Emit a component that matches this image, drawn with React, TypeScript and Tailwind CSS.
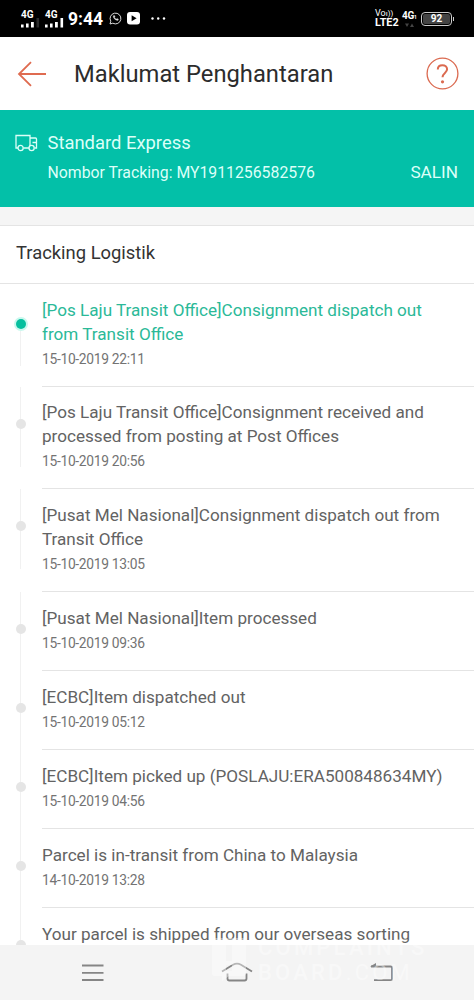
import React from 'react';
import { clsx } from 'clsx';

interface TrackingEvent {
  lines: string[];
  time?: string;
}

const events: TrackingEvent[] = [
  {
    lines: ['[Pos Laju Transit Office]Consignment dispatch out', 'from Transit Office'],
    time: '15-10-2019 22:11',
  },
  {
    lines: ['[Pos Laju Transit Office]Consignment received and', 'processed from posting at Post Offices'],
    time: '15-10-2019 20:56',
  },
  {
    lines: ['[Pusat Mel Nasional]Consignment dispatch out from', 'Transit Office'],
    time: '15-10-2019 13:05',
  },
  { lines: ['[Pusat Mel Nasional]Item processed'], time: '15-10-2019 09:36' },
  { lines: ['[ECBC]Item dispatched out'], time: '15-10-2019 05:12' },
  { lines: ['[ECBC]Item picked up (POSLAJU:ERA500848634MY)'], time: '15-10-2019 04:56' },
  { lines: ['Parcel is in-transit from China to Malaysia'], time: '14-10-2019 13:28' },
  { lines: ['Your parcel is shipped from our overseas sorting'] },
];

/** Signal strength with the network label on top */
const Signal: React.FC<{ dimLast?: boolean }> = ({ dimLast }) => (
  <div className="flex w-[19px] flex-col">
    <span className="text-[10px] font-bold leading-[10px]">4G</span>
    <svg width="19" height="11" viewBox="0 0 19 11" className="-mt-[3px]" fill="#fff">
      <rect x="0" y="7.5" width="2.6" height="3" />
      <rect x="5" y="6.5" width="2.6" height="4" />
      <rect x="10" y="5" width="2.8" height="5.5" />
      <rect x="15.5" y="1" width="2.6" height="9.5" fill={dimLast ? '#2b2b2b' : '#fff'} />
    </svg>
  </div>
);

const StatusBar: React.FC = () => (
  <header className="flex h-[37px] shrink-0 items-center bg-black pl-[21px] pr-[20px] text-white">
    <Signal dimLast />
    <div className="ml-[5px]">
      <Signal />
    </div>
    <span className="ml-[4px] mt-[2px] text-[17.5px] font-bold leading-none">9:44</span>
    <svg width="13" height="13" viewBox="0 0 13 13" className="ml-[6px]" fill="none" stroke="#ddd" strokeWidth="1">
      <path d="M1 12l.8-2.8A5.4 5.4 0 1 1 3.8 11.2z" />
      <path d="M4.3 3.7c-.7 1.8 2.4 5.1 4.7 4.7l.5-1.2-1.4-.8-.8.6C6.3 6.6 5.7 5.9 5.5 5.3l.6-.7-.6-1.2z" fill="#ddd" strokeWidth=".3" />
    </svg>
    <svg width="13" height="13" viewBox="0 0 13 13" className="ml-[5px]">
      <rect width="13" height="12.5" rx="3" fill="#fff" />
      <path d="M4.6 3.3v6l5-3z" fill="#000" />
    </svg>
    <svg width="15" height="3" viewBox="0 0 15 3" className="ml-[11px]" fill="#fff">
      <circle cx="1.5" cy="1.5" r="1.2" />
      <circle cx="7.2" cy="1.5" r="1.2" />
      <circle cx="13" cy="1.5" r="1.2" />
    </svg>
    <div className="ml-auto flex w-[25px] flex-col">
      <span className="whitespace-nowrap text-[9px] leading-[8px]">Vo<span className="text-[8px]">ı))</span></span>
      <span className="whitespace-nowrap text-[10.8px] font-bold leading-[10px]">LTE2</span>
    </div>
    <div className="ml-[2px] flex w-[16px] flex-col">
      <span className="whitespace-nowrap text-[10px] font-bold leading-[11px] tracking-[-0.3px]">
        4G<span className="text-[5px]">1</span>
      </span>
      <svg width="9" height="5" viewBox="0 0 9 5" className="ml-[3px]" fill="#444">
        <path d="M0 .5h4L2 4z M5 4h4L7 .5z" />
      </svg>
    </div>
    <div className="ml-[3px] flex items-center">
      <div className="flex h-[14px] w-[31px] rounded-[4px] border border-[#ccc] p-[1px]">
        <div className="flex h-full w-full items-center justify-center rounded-[2px] bg-[#444] text-[10px] font-bold leading-none">
          92
        </div>
      </div>
      <div className="ml-px h-[4px] w-px bg-[#ccc]" />
    </div>
  </header>
);

const TitleBar: React.FC = () => (
  <div className="flex h-[73px] shrink-0 items-center bg-white pl-[17px] pr-[15px]">
    <svg width="30" height="26" viewBox="0 0 30 26" fill="none" stroke="#df6b50" strokeWidth="1.8">
      <path d="M29 13H2M14 1.2L2 13l12 11.8" />
    </svg>
    <h1 className="ml-[27px] whitespace-nowrap pt-[2px] text-[23.75px] leading-none text-[#2c2c2c]">Maklumat Penghantaran</h1>
    <svg width="33" height="33" viewBox="0 0 33 33" className="ml-auto" fill="none" stroke="#db6a50">
      <circle cx="16.5" cy="16.5" r="15.4" strokeWidth="1.3" />
      <path d="M11.8 12.5c0-2.8 2-4.3 4.6-4.3s4.7 1.6 4.7 4.1c0 3.5-4.6 3.8-4.6 8" strokeWidth="2" />
      <circle cx="16.5" cy="24.8" r="1.6" fill="#db6a50" stroke="none" />
    </svg>
  </div>
);

const Courier: React.FC = () => (
  <section className="flex h-[97px] shrink-0 bg-[#03c0a8] pl-[15px] pr-[16px] pt-[20px] text-[#dcfff8]">
    <svg width="23" height="18" viewBox="0 0 23 18" className="mt-[4px]" fill="none" stroke="currentColor" strokeWidth="1.3">
      <path d="M3 14H1V1.5h14V14H8.5M15 4h5.5q1 0 1 1v9h-2M15 14v-2M17.5 8.5h4" />
      <circle cx="5.6" cy="14" r="2.6" />
      <circle cx="16.6" cy="14" r="2.6" fill="#03c0a8" />
    </svg>
    <div className="ml-[9.5px] flex flex-1 flex-col">
      <span className="text-[18.4px] leading-[25px]">Standard Express</span>
      <div className="mt-[4.5px] flex items-center justify-between leading-[25px]">
        <span className="text-[15.8px]">Nombor Tracking: MY1911256582576</span>
        <span className="text-[17.2px]">SALIN</span>
      </div>
    </div>
  </section>
);

const EventRow: React.FC<{ event: TrackingEvent; active: boolean }> = ({ event, active }) => {
  const tall = event.lines.length > 1;

  return (
    <li className={clsx('flex shrink-0', tall ? 'h-[102.6px]' : 'h-[79px]')}>
      <div className="relative w-[42px]">
        <div className={clsx('absolute left-[20px] w-px bg-[#f1f1f1]', active ? 'top-[40px] h-[42px]' : 'top-0', !active && (tall ? 'h-[80px]' : 'h-[79px]'))} />
        {active ? (
          <div className="absolute left-[14px] top-[32.5px] flex h-[14px] w-[14px] items-center justify-center rounded-full bg-[#c9f8ee]">
            <div className="h-[10px] w-[10px] rounded-full bg-[#06bf9e]" />
          </div>
        ) : (
          <div className="absolute left-[16px] top-[32px] h-[10px] w-[10px] rounded-full bg-[#e5e5e5]" />
        )}
      </div>
      <div className="flex-1 border-b border-[#e4e4e4] pt-[14.9px]">
        <p className={clsx('whitespace-nowrap text-[17.12px] leading-[23.7px]', active ? 'text-[#2bb998]' : 'text-[#636363]')}>
          {event.lines.map((line) => (
            <span key={line} className="block">{line}</span>
          ))}
        </p>
        {event.time && (
          <p className="mt-[3.5px] text-[13.8px] leading-[18px] tracking-[-0.3px] text-[#737373]">{event.time}</p>
        )}
      </div>
    </li>
  );
};

const NavBar: React.FC = () => (
  <nav className="relative h-[55px] shrink-0 bg-[#f4f4f4]">
    <div className="flex items-center pl-[82px] pt-[15px]">
      <svg width="22" height="24" viewBox="0 0 22 24" fill="none" stroke="#858585" strokeWidth="1.8">
        <path d="M0 5.5h21.5M0 12.8h21.5M0 20h21.5" />
      </svg>
      <svg width="32" height="24" viewBox="0 0 32 24" className="ml-[117px]" fill="none" stroke="#858585" strokeWidth="1.8">
        <path d="M1 11.5L12 4.7q4-2 8 0l11 6.8M6.5 13.5v5q0 2 2 2h15q2 0 2-2v-5" />
      </svg>
      <svg width="24" height="24" viewBox="0 0 24 24" className="ml-[117px]" fill="none" stroke="#858585" strokeWidth="1.8">
        <path d="M1 6.5h19.5q1.500 0 1.500 1.500v11q0 1.200-1.500 1.200H4" />
        <path d="M0 6.5L6 3v3.500z" fill="#858585" stroke="none" />
      </svg>
    </div>
    {/* translucent site mark lying over the list and the bar */}
    <div className="absolute left-[212px] top-[-10px] flex text-white/40">
      <svg width="34" height="46" viewBox="0 0 34 46" fill="currentColor">
        <path d="M3 3h28q3 0 3 3v32q0 3-3 3H17l-7 5v-5H3q-3 0-3-3V6q0-3 3-3zM14 9v17h6V9zM14 30v6h6v-6z" fillRule="evenodd" />
      </svg>
      <div className="ml-[12px] flex flex-col whitespace-nowrap text-[22px] font-medium leading-[25px]">
        <span className="tracking-[3.2px]">COMPLAINTS</span>
        <span className="tracking-[3.2px]">
          BOARD<span className="font-normal">.COM</span>
        </span>
      </div>
    </div>
  </nav>
);

export default function App() {
  return (
    <div className="flex h-[1000px] w-[474px] flex-col overflow-hidden bg-white font-['Roboto',sans-serif]">
      <StatusBar />
      <TitleBar />
      <Courier />
      <div className="h-[18px] shrink-0 bg-[#f5f5f5]" />
      <h2 className="flex h-[59px] shrink-0 items-center border-y border-[#e4e4e4] pb-[4px] pl-[16px] text-[18.4px] text-[#333]">
        Tracking Logistik
      </h2>
      <ul className="flex min-h-0 flex-1 flex-col overflow-hidden">
        {events.map((event, i) => (
          <EventRow key={event.lines[0]} event={event} active={i === 0} />
        ))}
      </ul>
      <NavBar />
    </div>
  );
}
